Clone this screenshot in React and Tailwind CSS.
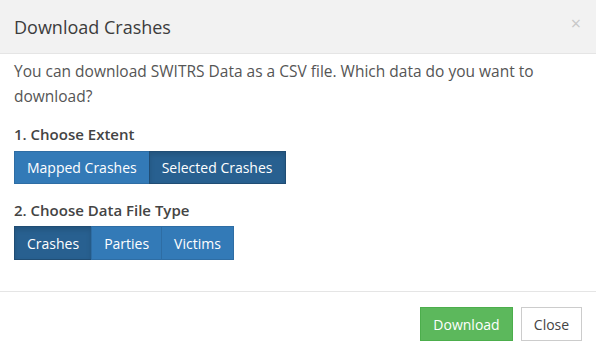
export default function App() {
  const font = { fontFamily: '"Open Sans", "Liberation Sans", sans-serif' };
  return (
    <div className="w-[596px] h-[355px] bg-white flex flex-col text-[#555]" style={font}>
      <div className="h-[54px] bg-[#f2f2f2] border-b border-[#e5e5e5] flex items-center justify-between pl-[14px] pr-[15px] shrink-0">
        <h4 className="text-[18px] font-normal text-[#3c3c3c] leading-none">Download Crashes</h4>
        <span className="text-[#c8c8c8] text-[18px] leading-none -mt-[8px]">×</span>
      </div>
      <div className="px-[14px] pt-[5px] h-[237px] shrink-0">
        <p className="text-[15.5px] leading-[25px]">
          You can download SWITRS Data as a CSV file. Which data do you want to download?
        </p>
        <div className="mt-[15px] text-[15px] leading-[21px] font-semibold text-[#444]">1. Choose Extent</div>
        <div className="mt-[6px] flex text-white text-[14px]">
          <button className="h-[33px] px-[12px] bg-[#337ab7] border border-[#2e6da4]">Mapped Crashes</button>
          <button className="h-[33px] px-[12px] bg-[#286090] border border-[#204d74] -ml-px shadow-[inset_0_3px_5px_rgba(0,0,0,0.125)]">Selected Crashes</button>
        </div>
        <div className="mt-[16px] text-[15px] leading-[21px] font-semibold text-[#444]">2. Choose Data File Type</div>
        <div className="mt-[5px] flex text-white text-[14px]">
          <button className="h-[34px] px-[12px] bg-[#286090] border border-[#204d74] shadow-[inset_0_3px_5px_rgba(0,0,0,0.125)]">Crashes</button>
          <button className="h-[34px] px-[12px] bg-[#337ab7] border border-[#2e6da4] -ml-px">Parties</button>
          <button className="h-[34px] px-[12px] bg-[#337ab7] border border-[#2e6da4] -ml-px">Victims</button>
        </div>
      </div>
      <div className="border-t border-[#e5e5e5] flex justify-end gap-[8px] pr-[14px] pt-[15px]">
        <button className="h-[34px] w-[93px] bg-[#5cb85c] border border-[#4cae4c] text-white text-[14px]">Download</button>
        <button className="h-[34px] w-[61px] bg-white border border-[#ccc] text-[#444] text-[14px]">Close</button>
      </div>
    </div>
  );
}
